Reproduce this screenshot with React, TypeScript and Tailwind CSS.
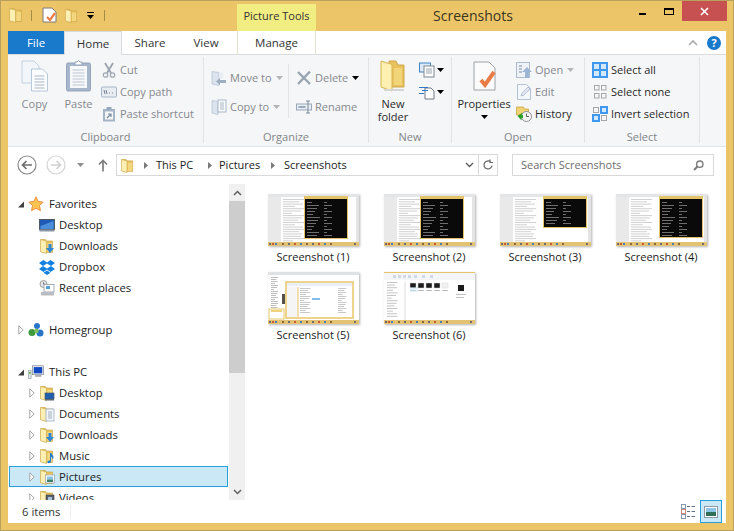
import type { ReactNode } from 'react';

const dim = 'text-[#85898f]';

function Folder({ size = 16 }: { size?: number }) {
  return (
    <svg width={size} height={size} viewBox="0 0 16 16" className="shrink-0">
      <path d="M2 1.500h4.500l1 1.500h6v11.500h-9z" fill="#e8c25f" stroke="#c9a243" strokeWidth="0.6" />
      <path d="M1.500 1.500l6 1.600v12.400l-6-1.700z" fill="#fcefb4" stroke="#cfaa4b" strokeWidth="0.7" />
      <rect x="8.500" y="5" width="4.500" height="9" fill="#f3d77f" />
    </svg>
  );
}

function Arrow({ open }: { open?: boolean }) {
  return (
    <svg width="6" height="10" viewBox="0 0 6 10" className="shrink-0">
      {open ? (
        <path d="M6 2.500v6H0z" fill="#404040" />
      ) : (
        <path d="M.8.8l4.400 4.200-4.400 4.200z" fill="#fff" stroke="#a6a6a6" />
      )}
    </svg>
  );
}

function Caret({ color = '#000', className = '' }: { color?: string; className?: string }) {
  return (
    <svg width="7" height="4" viewBox="0 0 7 4" className={`shrink-0 ${className}`}>
      <path d="M0 0h7L3.500 4z" fill={color} />
    </svg>
  );
}

function FolderBadge({ kind }: { kind: string }) {
  return (
    <span className="relative block w-[16px] h-[16px] shrink-0">
      <Folder />
      <svg width="16" height="16" viewBox="0 0 16 16" className="absolute left-0 top-0">
        {kind === 'desktop2' && (
          <>
            <rect x="6" y="8" width="9" height="6" fill="#1e5fb0" stroke="#4b5a6b" strokeWidth="0.7" />
            <rect x="6" y="14" width="9" height="1.500" fill="#5a6672" />
          </>
        )}
        {kind === 'docs' && (
          <>
            <rect x="7" y="3" width="8" height="12" fill="#f3f6fa" stroke="#8ea0b5" strokeWidth="0.7" />
            <path d="M9 6h4M9 8h4M9 10h4M9 12h4" stroke="#8ea0b5" strokeWidth="0.8" />
          </>
        )}
        {kind === 'down' && <path d="M9.500 6h3v4H15l-4 5-4-5h2.500z" fill="#2f86d6" />}
        {kind === 'music' && (
          <path d="M11 5h1.500c0 2 2 2 2 4 0 1-.5 1.500-1 2l-.5-.5c.5-1-1-2-1-2v5c0 1.500-3 2.500-3.500 1s1-2 2.500-2z" fill="#1f7ed0" />
        )}
        {kind === 'pics' && (
          <>
            <rect x="6.500" y="6" width="9" height="8" fill="#fff" stroke="#8c9aa8" strokeWidth="0.7" />
            <rect x="8" y="7.500" width="6" height="3" fill="#8cc4e8" />
            <rect x="8" y="10.500" width="6" height="2.500" fill="#3f7f6a" />
          </>
        )}
        {kind === 'video' && (
          <>
            <rect x="7" y="5" width="8" height="10" fill="#56606a" stroke="#3c444c" strokeWidth="0.6" />
            <rect x="9" y="7" width="4" height="5" fill="#a9c4d8" />
          </>
        )}
      </svg>
    </span>
  );
}

function NavIcon({ kind }: { kind: string }) {
  if (kind === 'star')
    return (
      <svg width="16" height="16" viewBox="0 0 16 16" className="shrink-0">
        <path d="M8 .8l2.200 4.700 5 .6-3.700 3.500 1 5.100L8 12.200l-4.500 2.500 1-5.100L.8 6.100l5-.6z" fill="#fbc350" stroke="#e8893a" strokeWidth="0.9" />
      </svg>
    );
  if (kind === 'desktop')
    return (
      <svg width="16" height="16" viewBox="0 0 16 16" className="shrink-0">
        <rect x=".5" y="2.500" width="15" height="10" fill="#1f5bb5" stroke="#4f5a66" />
        <path d="M1.500 9l13-5v8h-13z" fill="#4b8fdc" />
        <rect x=".5" y="12.500" width="15" height="2" fill="#8b97a3" />
      </svg>
    );
  if (kind === 'dropbox')
    return (
      <svg width="16" height="16" viewBox="0 0 16 16" className="shrink-0">
        <path d="M4.500 1L0 4l4 3-4 3 4.500 3L8 10.500 11.500 13l4.500-3-4-3 4-3-4.500-3L8 3.500zM8 4.500L12 7 8 9.500 4 7zM4.500 13.800L8 11.500l3.500 2.300L8 16z" fill="#1481e0" fillRule="evenodd" />
      </svg>
    );
  if (kind === 'recent')
    return (
      <svg width="16" height="16" viewBox="0 0 16 16" className="shrink-0">
        <circle cx="4.500" cy="4" r="3.500" fill="#e8e8e8" stroke="#8a8a8a" strokeWidth="0.8" />
        <path d="M4.500 2v2.200h2" stroke="#555" fill="none" strokeWidth="0.7" />
        <rect x="5" y="4.500" width="10" height="7.500" fill="#fff" stroke="#8f9aa5" strokeWidth="0.8" />
        <rect x="7" y="6" width="4" height="3" fill="#4fa0dc" />
        <rect x="2" y="12" width="13" height="3.500" fill="#b9bdc2" />
      </svg>
    );
  if (kind === 'home')
    return (
      <svg width="16" height="16" viewBox="0 0 16 16" className="shrink-0">
        <circle cx="9" cy="4" r="3" fill="#2874c9" />
        <circle cx="4" cy="10.500" r="3.500" fill="#3e9a3c" />
        <circle cx="12" cy="11" r="3.500" fill="#2874c9" />
        <circle cx="8.500" cy="9" r="2.200" fill="#7fc25c" />
      </svg>
    );
  if (kind === 'pc')
    return (
      <svg width="16" height="16" viewBox="0 0 18 16" className="shrink-0">
        <rect x=".5" y="6" width="3" height="9.500" fill="#dfe3e6" stroke="#8e9aa0" strokeWidth="0.7" />
        <rect x="1" y="8" width="2" height="2" fill="#63b54a" />
        <rect x="5" y="1" width="12.500" height="10" fill="#e8ecf0" stroke="#7f8a96" strokeWidth="0.8" />
        <rect x="6.500" y="2.500" width="9.500" height="7" fill="#1447c4" />
        <rect x="8" y="11" width="7" height="2.500" fill="#a9b0b6" />
      </svg>
    );
  return <FolderBadge kind={kind} />;
}

function NavRow({ label, icon, level = 0, arrow, selected }: { label: string; icon: string; level?: number; arrow?: 'open' | 'closed'; selected?: boolean }) {
  return (
    <div
      className={`flex h-[21px] shrink-0 items-center border text-[11.300px] text-[#1c1c1c] ${
        selected ? 'border-[#26a0da] bg-[#cbe8f6]' : 'border-transparent'
      } ${level ? 'pl-[19px]' : 'pl-[8px]'}`}
    >
      <span className="mr-[4px] w-[6px] shrink-0">{arrow && <Arrow open={arrow === 'open'} />}</span>
      <span className={`flex w-[16px] shrink-0 ${level ? 'mr-[4px]' : 'mr-[5px]'}`}>
        <NavIcon kind={icon} />
      </span>
      <span className="pt-px">{label}</span>
    </div>
  );
}

function Group({ label, width, children }: { label: string; width: number; children: ReactNode }) {
  return (
    <div style={{ width }} className="flex h-[86px] shrink-0 flex-col border-r border-[#e2e3e5]">
      <div className="flex min-h-0 flex-1">{children}</div>
      <div className="text-center text-[11px] leading-[12px] text-[#81858a]">{label}</div>
    </div>
  );
}

function BigBtn({ width, icon, label, disabled }: { width: number; icon: ReactNode; label: ReactNode; disabled?: boolean }) {
  return (
    <div style={{ width }} className={`flex shrink-0 flex-col items-center pt-[3px] text-center text-[11px] leading-[13px] ${disabled ? dim : 'text-[#2a2a2a]'}`}>
      <div className="flex h-[32px] items-center justify-center">{icon}</div>
      <div className="mt-[5px]">{label}</div>
    </div>
  );
}

function SmallBtn({ icon, label, disabled, caret, gap = 3 }: { icon: ReactNode; label: string; disabled?: boolean; caret?: string; gap?: number }) {
  return (
    <div style={{ gap }} className={`flex h-[22px] items-center whitespace-nowrap text-[11px] ${disabled ? dim : 'text-[#2a2a2a]'}`}>
      <span className="flex w-[16px] shrink-0 justify-center">{icon}</span>
      {label}
      {caret && <Caret color={caret} className="ml-[1px]" />}
    </div>
  );
}

const s16 = { width: 16, height: 16, viewBox: '0 0 16 16' };

const icons = {
  copy: (
    <svg width="28" height="32" viewBox="0 0 28 32">
      <path d="M1 1h12l5 5v17H1z" fill="#f2f6fb" stroke="#c3d0e0" />
      <path d="M10.500 9h11l5 5v17h-16z" fill="#fbfcfe" stroke="#b8c7da" />
      <path d="M13.500 16h10M13.500 19h10M13.500 22h10M13.500 25h10M13.500 28h10" stroke="#a9b6c7" />
    </svg>
  ),
  paste: (
    <svg width="25" height="32" viewBox="0 0 25 32">
      <rect x=".5" y="3" width="24" height="28" rx="1.500" fill="#a8b6cc" stroke="#94a4bc" />
      <rect x="4" y="6" width="17" height="22" fill="#f7f8fa" />
      <path d="M6.500 10h12M6.500 13h12M6.500 16h12M6.500 19h12M6.500 22h12M6.500 25h12" stroke="#bcc6d4" />
      <path d="M9 5V2h2l1.500-1.500L14 2h2v3z" fill="#fff" stroke="#94a4bc" />
    </svg>
  ),
  cut: (
    <svg {...s16}>
      <path d="M4 1l6 10M12 1L6 11" stroke="#9aa3ae" strokeWidth="1.800" />
      <circle cx="4.500" cy="13" r="2.200" fill="none" stroke="#a0a9b5" strokeWidth="1.300" />
      <circle cx="11.500" cy="13" r="2.200" fill="none" stroke="#a0a9b5" strokeWidth="1.300" />
    </svg>
  ),
  copyPath: (
    <svg {...s16}>
      <rect x=".5" y="3" width="15" height="10" rx="1" fill="#e8edf4" stroke="#a6b4c6" />
      <path d="M3 6l1 4M5 6l1 4M8 9h1M11 9h1" stroke="#77818e" />
    </svg>
  ),
  shortcut: (
    <svg {...s16}>
      <rect x="2" y="3" width="12" height="12.500" fill="#a6b4c8" />
      <rect x="4" y="5.500" width="8" height="8" fill="#f3f5f8" />
      <rect x="5.500" y="1" width="5" height="3" fill="#98a7bd" />
      <path d="M6 12l3.500-3.500M7 8h3v3" stroke="#7e8da3" fill="none" strokeWidth="1.200" />
    </svg>
  ),
  moveTo: (
    <svg {...s16}>
      <path d="M1 1.500l7 1v13l-7-1.500z" fill="#dbe3ee" stroke="#b3c0d0" strokeWidth="0.7" />
      <rect x="8" y="2.500" width="4" height="6" fill="#e8edf3" />
      <path d="M5 11.500L9 8v2h6v3H9v2z" fill="#9fadc0" />
    </svg>
  ),
  copyTo: (
    <svg {...s16}>
      <path d="M1 1.500l6 1v13l-6-1.500z" fill="#dbe3ee" stroke="#b3c0d0" strokeWidth="0.7" />
      <rect x="7" y="1" width="8" height="12" fill="#fafbfc" stroke="#a9b7c9" />
      <path d="M9 4h4M9 6h4M9 8h4M9 10h4" stroke="#a9b7c9" />
    </svg>
  ),
  del: (
    <svg {...s16}>
      <path d="M2 2l12 12M14 1.500L2 14" stroke="#9aa5b3" strokeWidth="2.400" />
    </svg>
  ),
  rename: (
    <svg {...s16}>
      <rect x=".5" y="5" width="15" height="6" fill="#e8edf4" stroke="#9aa9bc" />
      <rect x="2.500" y="7" width="7" height="2" fill="#9aa9bc" />
      <path d="M10 2h4M12 2v12M10 14h4" stroke="#7f8b9a" />
    </svg>
  ),
  newFolder: (
    <svg width="26" height="32" viewBox="0 0 26 32">
      <path d="M9 1h7l2 4h6v22H9z" fill="#e8c25f" stroke="#cfa94c" />
      <path d="M1 1l11 3.500V31L1 27z" fill="#fdf0b0" stroke="#d9b651" />
      <path d="M14 8h8v17h-8z" fill="#f2d479" />
      <path d="M4 30h20" stroke="#d6d6d6" strokeWidth="2" />
    </svg>
  ),
  newItem: (
    <svg width="16" height="16" viewBox="0 0 16 16">
      <rect x=".5" y="1" width="11" height="9" fill="#dbe9f7" stroke="#3f83c9" />
      <rect x="5" y="4" width="10" height="11" fill="#fff" stroke="#7d8793" />
      <path d="M7 7h6M7 9h6M7 11h6" stroke="#9aa3ad" />
    </svg>
  ),
  easy: (
    <svg width="16" height="16" viewBox="0 0 16 16">
      <path d="M6 4h6l3 3v8H6z" fill="#fff" stroke="#6f7883" />
      <path d="M0 3.500h9M3 6.500h6M0 9.500h5" stroke="#2f78c8" />
    </svg>
  ),
  properties: (
    <svg width="23" height="30" viewBox="0 0 23 30">
      <path d="M1 1h15l6 6v22H1z" fill="#fbfbfb" stroke="#9ea2a6" />
      <path d="M8 19l4 5 9-13" stroke="#e97c46" strokeWidth="4" fill="none" />
    </svg>
  ),
  open: (
    <svg {...s16}>
      <rect x=".5" y=".5" width="13" height="15" fill="#eef2f7" stroke="#aebbcc" />
      <path d="M3 4h3M3 7h3M3 10h3" stroke="#9fb0c4" strokeWidth="1.500" />
      <path d="M11 5l5 5h-3v6H9v-6H6z" fill="#9db5d4" />
    </svg>
  ),
  edit: (
    <svg {...s16}>
      <path d="M1.500.5h9l4 4v11h-13z" fill="#f4f7fb" stroke="#b3c2d4" />
      <path d="M5 12l1-3 6-6 2 2-6 6z" fill="#dfe6ef" stroke="#a9b8cb" strokeWidth="0.8" />
    </svg>
  ),
  history: (
    <svg {...s16}>
      <path d="M.5 1h7l1 2h4v6H.5z" fill="#f2d374" stroke="#c8a548" strokeWidth="0.8" />
      <circle cx="10.500" cy="10.500" r="5" fill="#f5f5f5" stroke="#8a8f95" />
      <path d="M10.500 7.500v3h2.500" fill="none" stroke="#555" strokeWidth="0.9" />
      <path d="M6.500 6.500L1.500 10l4 4.500V12H7V9H5.500z" fill="#2e9e2a" />
    </svg>
  ),
  selectAll: (
    <svg {...s16}>
      <rect width="16" height="16" fill="#3f97ee" />
      <rect x="2" y="2" width="5" height="5" fill="#d2e8fb" />
      <rect x="9" y="2" width="5" height="5" fill="#d2e8fb" />
      <rect x="2" y="9" width="5" height="5" fill="#d2e8fb" />
      <rect x="9" y="9" width="5" height="5" fill="#d2e8fb" />
    </svg>
  ),
  selectNone: (
    <svg {...s16} fill="none" stroke="#a6a6a6">
      <rect x="2.500" y="1.500" width="4.500" height="4.500" />
      <rect x="9.500" y="1.500" width="4.500" height="4.500" />
      <rect x="2.500" y="9.500" width="4.500" height="4.500" />
      <rect x="9.500" y="9.500" width="4.500" height="4.500" />
    </svg>
  ),
  invert: (
    <svg {...s16}>
      <rect x="1.500" y="1.500" width="5" height="5" fill="none" stroke="#a6a6a6" />
      <rect x="8" y="0" width="8" height="8" fill="#3f97ee" />
      <rect x="10" y="2" width="4" height="4" fill="#d2e8fb" />
      <rect x="0" y="8" width="8" height="8" fill="#3f97ee" />
      <rect x="2" y="10" width="4" height="4" fill="#d2e8fb" />
      <rect x="9.500" y="9.500" width="5" height="5" fill="none" stroke="#a6a6a6" />
    </svg>
  ),
};

const pageLines = [21, 16, 20, 12, 21, 18, 9, 21, 19, 15, 21, 12, 20, 21, 16, 19, 18, 21, 10];

function Thumb({ kind }: { kind: number }) {
  const terminals: Record<number, { x: number; w: number; h: number }> = {
    1: { x: 36, w: 44, h: 43 },
    2: { x: 36, w: 44, h: 43 },
    3: { x: 43, w: 44, h: 32 },
    4: { x: 43, w: 44, h: 42 },
  };
  const t = terminals[kind];
  return (
    <svg width="91" height="52" viewBox="0 0 91 52" className="block blur-[0.5px] drop-shadow-[1px_1px_1px_rgba(0,0,0,0.3)]">
      <rect width="91" height="52" fill="#fff" />
      {t && (
        <>
          <rect width="91" height="3" fill="#e3e5e7" />
          <rect y="3" width="13" height="45" fill="#e9e9e9" />
          <rect x="88" y="3" width="3" height="45" fill="#e4e4e4" />
          {pageLines.map((w, i) => (
            <rect key={i} x="15" y={5 + i * 2.300} width={w} height="1" fill="#d0d0d0" />
          ))}
          <rect x={t.x} y="2" width={t.w} height={t.h} fill="#e2c368" />
          <rect x={t.x + 1} y="5" width={t.w - 2} height={t.h - 4} fill="#0a0a0a" />
          {[0, 1, 2, 3, 4, 5, 6, 7, 8, 9, 10, 11].filter((i) => 8 + i * 3 < t.h).map((i) => (
            <g key={i}>
              <rect x={t.x + 3} y={8 + i * 3} width={5 + ((i * 7) % 9)} height="1" fill="#6e6e6e" />
              <rect x={t.x + 20} y={8 + i * 3} width={3 + ((i * 5) % 10)} height="1" fill="#6e6e6e" />
            </g>
          ))}
        </>
      )}
      {kind === 5 && (
        <>
          <rect width="91" height="3" fill="#dfe1e3" />
          {pageLines.map((w, i) => (
            <rect key={i} x="3" y={5 + i * 2} width={w / 3} height="1" fill="#bdbdbd" />
          ))}
          <rect x="18" y="10" width="67" height="36" fill="#fff" stroke="#e8c56a" strokeWidth="1.500" />
          <rect x="19" y="11" width="65" height="3" fill="#e8f0f8" />
          <rect x="19" y="15" width="11" height="30" fill="#f5f5f5" />
          <path d="M30 15v30" stroke="#e8c56a" />
          {pageLines.slice(0, 13).map((w, i) => (
            <rect key={i} x="32" y={16 + i * 2} width={w / 2} height="1" fill="#c8c8c8" />
          ))}
          {pageLines.slice(0, 13).map((w, i) => (
            <rect key={i} x="70" y={16 + i * 2} width={w / 2.500} height="1" fill="#c8c8c8" />
          ))}
          <rect x="44" y="26" width="8" height="2" fill="#7fbfea" />
          <rect x="14" y="22" width="3" height="10" fill="#55504a" />
          <rect x="1" y="37" width="15" height="10" fill="#fff" stroke="#e8c56a" />
          <rect x="3" y="38" width="11" height="2" fill="#f1d27c" />
        </>
      )}
      {kind === 6 && (
        <>
          <rect width="91" height="1" fill="#e8c56a" />
          <rect y="1" width="91" height="7" fill="#f4f5f6" />
          {[9, 14, 19, 24, 30, 38, 46].map((x) => (
            <rect key={x} x={x} y="3" width="3" height="3" fill="#cfd8e4" />
          ))}
          <rect y="8" width="21" height="40" fill="#fff" />
          <path d="M21 10v38" stroke="#dddddd" />
          {pageLines.slice(0, 14).map((w, i) => (
            <rect key={i} x="3" y={10 + i * 2.600} width={w / 2} height="1" fill="#c4c4c4" />
          ))}
          {[26, 34, 42, 50, 58].map((x, i) => (
            <g key={x}>
              <rect x={x} y="11" width="6" height="5" fill={i === 4 ? '#f1f1f1' : '#1c1c1c'} stroke="#dadada" strokeWidth="0.500" />
              <rect x={x} y="18" width="6" height="1" fill="#bdbdbd" />
            </g>
          ))}
          <rect x="26" y="15" width="8" height="5" fill="#cbe8f6" opacity="0.500" />
          <rect x="74" y="13" width="6" height="6" fill="#1c1c1c" />
          <rect x="72" y="22" width="10" height="1" fill="#c0c0c0" />
          <rect x="72" y="25" width="8" height="1" fill="#c0c0c0" />
        </>
      )}
      <rect y="48" width="91" height="4" fill="#e4c273" />
      {[1, 4, 7, 14, 20, 26, 32, 38, 44, 50, 56, 62, 86].map((x, i) => (
        <rect key={x} x={x} y="49" width="2" height="2" fill={['#6d6d6d', '#c75a3a', '#4a7fb5', '#8a6a3a'][i % 4]} />
      ))}
    </svg>
  );
}

export default function App() {
  const nav: { label: string; icon?: string; level?: number; arrow?: 'open' | 'closed'; selected?: boolean }[] = [
    { label: 'Favorites', icon: 'star', arrow: 'open' },
    { label: 'Desktop', icon: 'desktop', level: 1 },
    { label: 'Downloads', icon: 'down', level: 1 },
    { label: 'Dropbox', icon: 'dropbox', level: 1 },
    { label: 'Recent places', icon: 'recent', level: 1 },
    { label: '' },
    { label: 'Homegroup', icon: 'home', arrow: 'closed' },
    { label: '' },
    { label: 'This PC', icon: 'pc', arrow: 'open' },
    { label: 'Desktop', icon: 'desktop2', level: 1, arrow: 'closed' },
    { label: 'Documents', icon: 'docs', level: 1, arrow: 'closed' },
    { label: 'Downloads', icon: 'down', level: 1, arrow: 'closed' },
    { label: 'Music', icon: 'music', level: 1, arrow: 'closed' },
    { label: 'Pictures', icon: 'pics', level: 1, arrow: 'closed', selected: true },
    { label: 'Videos', icon: 'video', level: 1, arrow: 'closed' },
  ];

  return (
    <div className="flex h-[531px] w-[734px] flex-col overflow-hidden border border-[#b8a15f] bg-[#edc569] px-[7px] pb-[7px] font-['Open_Sans',sans-serif]">
      {/* title bar */}
      <div className="flex h-[30px] shrink-0 items-end -mr-px">
        <div className="flex h-[30px] w-[229px] shrink-0 items-center pb-[2px]">
          <Folder />
          <span className="ml-[7px] mr-[10px] h-[11px] w-px bg-[#a58b45]" />
          <svg width="16" height="16" viewBox="0 0 16 16" className="shrink-0">
            <path d="M1 1h9l4 4v10H1z" fill="#fff" stroke="#7a7a7a" />
            <path d="M5 10l3 3 5-7" stroke="#e97c46" strokeWidth="2.200" fill="none" />
          </svg>
          <span className="ml-[6px]">
            <Folder size={15} />
          </span>
          <span className="ml-[8px] flex flex-col items-center gap-[2px]">
            <span className="h-px w-[7px] bg-black" />
            <Caret />
          </span>
          <span className="ml-[10px] h-[11px] w-px bg-[#a58b45]" />
        </div>
        <div className="flex h-[27px] w-[79px] shrink-0 items-center justify-center bg-[#f1ed83] pb-[2px] text-[11px] text-[#333]">Picture Tools</div>
        <div className="flex h-[30px] flex-1 items-center justify-center pb-[1px] text-[14px] text-[#3a3420]">Screenshots</div>
        <div className="flex h-[30px] w-[97px] shrink-0 items-start">
          <span className="ml-[9px] mt-[12px] h-[2px] w-[7px] bg-black" />
          <span className="ml-[18px] mt-[7px] h-[7px] w-[10px] border border-t-2 border-black" />
          <span className="ml-[8px] flex h-[20px] w-[45px] items-center justify-center bg-[#c75050]">
            <svg width="9" height="9" viewBox="0 0 9 9">
              <path d="M1 1l7 7M8 1L1 8" stroke="#fff" strokeWidth="1.600" />
            </svg>
          </span>
        </div>
      </div>

      <div className="flex min-h-0 flex-1 flex-col bg-white">
        {/* tabs */}
        <div className="flex h-[24px] shrink-0 border-b border-[#dadbdc] text-[11.500px] text-[#333]">
          <div className="flex h-[23px] w-[56px] items-center justify-center bg-[#1979ca] text-white">File</div>
          <div className="z-10 flex h-[24px] w-[58px] items-center justify-center border-x border-t border-[#dadbdc] bg-[#f5f6f7]">Home</div>
          <div className="flex w-[56px] items-center justify-center">Share</div>
          <div className="flex w-[59px] items-center justify-center pr-[3px]">View</div>
          <div className="flex w-[79px] items-center justify-center border-x border-[#e2e2d0]">Manage</div>
          <div className="flex flex-1 items-center justify-end gap-[9px] pr-[5px]">
            <svg width="10" height="6" viewBox="0 0 10 6">
              <path d="M1 5l4-4 4 4" fill="none" stroke="#a8a8a8" strokeWidth="1.600" />
            </svg>
            <span className="flex h-[14px] w-[14px] items-center justify-center rounded-full bg-[#1979ca] text-[11px] font-bold leading-none text-white">?</span>
          </div>
        </div>

        {/* ribbon */}
        <div className="flex h-[92px] shrink-0 border-b border-[#e1e3e6] bg-[#f5f6f7] py-[2px]">
          <Group label="Clipboard" width={196}>
            <div className="ml-[5px] flex">
              <BigBtn width={43} icon={icons.copy} label="Copy" disabled />
              <BigBtn width={45} icon={icons.paste} label="Paste" disabled />
            </div>
            <div className="pt-[2px]">
              <SmallBtn icon={icons.cut} label="Cut" disabled />
              <SmallBtn icon={icons.copyPath} label="Copy path" disabled />
              <SmallBtn icon={icons.shortcut} label="Paste shortcut" disabled />
            </div>
          </Group>
          <Group label="Organize" width={165}>
            <div className="flex flex-col gap-[7px] pl-[7px] pt-[10px]">
              <SmallBtn icon={icons.moveTo} label="Move to" disabled caret="#b5b5b5" />
              <SmallBtn icon={icons.copyTo} label="Copy to" disabled caret="#b5b5b5" />
            </div>
            <span className="ml-auto mt-[7px] h-[54px] w-px bg-[#e2e3e5]" />
            <div className="flex w-[79px] flex-col gap-[7px] pl-[7px] pt-[10px]">
              <SmallBtn icon={icons.del} label="Delete" disabled caret="#000" />
              <SmallBtn icon={icons.rename} label="Rename" disabled />
            </div>
          </Group>
          <Group label="New" width={83}>
            <BigBtn width={48} icon={icons.newFolder} label={<span className="block w-[40px]">New folder</span>} />
            <div className="ml-[2px] flex flex-col gap-[6px] pt-[5px]">
              <div className="flex items-center gap-[2px]">
                {icons.newItem}
                <Caret />
              </div>
              <div className="flex items-center gap-[2px]">
                {icons.easy}
                <Caret />
              </div>
            </div>
          </Group>
          <Group label="Open" width={133}>
            <BigBtn width={64} icon={icons.properties} label={<span className="flex flex-col items-center whitespace-nowrap">Properties<Caret className="mt-[5px]" /></span>} />
            <div className="pt-[2px]">
              <SmallBtn icon={icons.open} label="Open" disabled caret="#b5b5b5" />
              <SmallBtn icon={icons.edit} label="Edit" disabled />
              <SmallBtn icon={icons.history} label="History" />
            </div>
          </Group>
          <Group label="Select" width={115}>
            <div className="pl-[7px] pt-[2px]">
              <SmallBtn icon={icons.selectAll} label="Select all" />
              <SmallBtn icon={icons.selectNone} label="Select none" />
              <SmallBtn icon={icons.invert} label="Invert selection" />
            </div>
          </Group>
        </div>

        {/* address bar */}
        <div className="flex h-[37px] shrink-0 items-start pt-[7px] text-[11px] text-[#222]">
          <div className="flex h-[22px] w-[108px] shrink-0 items-center pl-[9px]">
            <svg width="20" height="20" viewBox="0 0 20 20">
              <circle cx="10" cy="10" r="9" fill="#fff" stroke="#8a8a8a" strokeWidth="1.200" />
              <path d="M15 10H6M9.500 6L5.500 10l4 4" fill="none" stroke="#6f6f6f" strokeWidth="1.700" />
            </svg>
            <svg width="20" height="20" viewBox="0 0 20 20" className="ml-[9px]">
              <circle cx="10" cy="10" r="9" fill="#fff" stroke="#d4d4d4" strokeWidth="1.200" />
              <path d="M5 10h9M10.500 6l4 4-4 4" fill="none" stroke="#d0d0d0" strokeWidth="1.700" />
            </svg>
            <Caret color="#8c8c8c" className="ml-[11px]" />
            <svg width="10" height="13" viewBox="0 0 10 13" className="ml-[14px]">
              <path d="M5 12.500V2M1 5.500L5 1.500l4 4" fill="none" stroke="#7d7d7d" strokeWidth="1.700" />
            </svg>
          </div>
          <div className="flex h-[22px] w-[382px] shrink-0 items-center border border-[#d9d9d9]">
            <span className="ml-[3px]"><Folder size={15} /></span>
            <svg width="4" height="7" viewBox="0 0 4 7" className="ml-[9px]"><path d="M0 0l4 3.500L0 7z" fill="#7a7a7a" /></svg>
            <span className="ml-[8px] w-[52px]">This PC</span>
            <svg width="4" height="7" viewBox="0 0 4 7"><path d="M0 0l4 3.500L0 7z" fill="#7a7a7a" /></svg>
            <span className="ml-[7px] w-[52px]">Pictures</span>
            <svg width="4" height="7" viewBox="0 0 4 7"><path d="M0 0l4 3.500L0 7z" fill="#7a7a7a" /></svg>
            <span className="ml-[9px]">Screenshots</span>
            <span className="ml-auto flex h-full w-[32px] items-center">
              <svg width="9" height="6" viewBox="0 0 9 6"><path d="M1 1l3.500 3.500L8 1" fill="none" stroke="#555" strokeWidth="1.300" /></svg>
              <span className="ml-[4px] flex h-full flex-1 items-center justify-center border-l border-[#d9d9d9]">
                <svg width="12" height="12" viewBox="0 0 12 12"><path d="M10 6.500A4 4 0 1 1 8.500 2.800M8 .5v3h3" fill="none" stroke="#666" strokeWidth="1.200" /></svg>
              </span>
            </span>
          </div>
          <div className="ml-[14px] flex h-[22px] w-[202px] shrink-0 items-center justify-between border border-[#d9d9d9] pl-[8px] pr-[9px] text-[#6d6d6d]">
            Search Screenshots
            <svg width="11" height="11" viewBox="0 0 11 11"><circle cx="6.800" cy="4.200" r="3.200" fill="none" stroke="#7a7a7a" strokeWidth="1.300" /><path d="M4.500 6.500L1 10" stroke="#7a7a7a" strokeWidth="2" /></svg>
          </div>
        </div>

        {/* body */}
        <div className="flex min-h-0 flex-1">
          <div className="flex w-[221px] shrink-0 flex-col overflow-hidden px-px pt-[9px]">
            {nav.map((r, i) =>
              r.icon ? (
                <NavRow key={i} label={r.label} icon={r.icon} level={r.level} arrow={r.arrow} selected={r.selected} />
              ) : (
                <div key={i} className="h-[21px] shrink-0" />
              ),
            )}
          </div>
          <div className="flex w-[16px] shrink-0 flex-col bg-[#f0f0f0]">
            <div className="flex h-[17px] items-center justify-center">
              <svg width="9" height="6" viewBox="0 0 9 6"><path d="M1 5l3.500-3.500L8 5" fill="none" stroke="#606060" strokeWidth="1.500" /></svg>
            </div>
            <div className="h-[172px] bg-[#cdcdcd]" />
            <div className="mt-auto flex h-[17px] items-center justify-center">
              <svg width="9" height="6" viewBox="0 0 9 6"><path d="M1 1l3.500 3.500L8 1" fill="none" stroke="#606060" strokeWidth="1.500" /></svg>
            </div>
          </div>
          <div className="grid flex-1 grid-cols-[repeat(4,116px)] content-start gap-y-[7px] pl-[10px] pt-[10px]">
            {[1, 2, 3, 4, 5, 6].map((n) => (
              <div key={n} className="flex flex-col items-center">
                <Thumb kind={n} />
                <div className="mt-[3px] text-[11px] leading-[16px] text-[#1c1c1c]">Screenshot ({n})</div>
              </div>
            ))}
          </div>
        </div>

        {/* status bar */}
        <div className="flex h-[23px] shrink-0 items-center text-[11.300px] text-[#333]">
          <span className="w-[61px] pl-[14px] pt-px">6 items</span>
          <span className="ml-[1px] h-[13px] w-px bg-[#ececec]" />
          <div className="ml-auto flex items-center gap-[4px] pr-[4px]">
            <svg width="15" height="15" viewBox="0 0 15 15">
              <rect x=".5" y=".5" width="4" height="4" fill="#fff" stroke="#8a99ad" />
              <rect x=".5" y="5.500" width="4" height="4" fill="#fff" stroke="#c98a7a" />
              <rect x=".5" y="10.500" width="4" height="4" fill="#fff" stroke="#8a99ad" />
              <path d="M6 2.500h3M10.500 2.500h3.500M6 7.500h3M10.500 7.500h3.500M6 12.500h3M10.500 12.500h3.500" stroke="#5f7086" />
            </svg>
            <span className="flex h-[23px] w-[22px] items-center justify-center border border-[#26a0da] bg-[#cbe8f6]">
              <svg width="14" height="12" viewBox="0 0 14 12">
                <rect x=".5" y=".5" width="13" height="11" fill="#fff" stroke="#8d99a6" />
                <rect x="2" y="2" width="10" height="4" fill="#8cc4e8" />
                <rect x="2" y="6" width="10" height="4" fill="#2f6f5a" />
              </svg>
            </span>
          </div>
        </div>
      </div>
    </div>
  );
}
